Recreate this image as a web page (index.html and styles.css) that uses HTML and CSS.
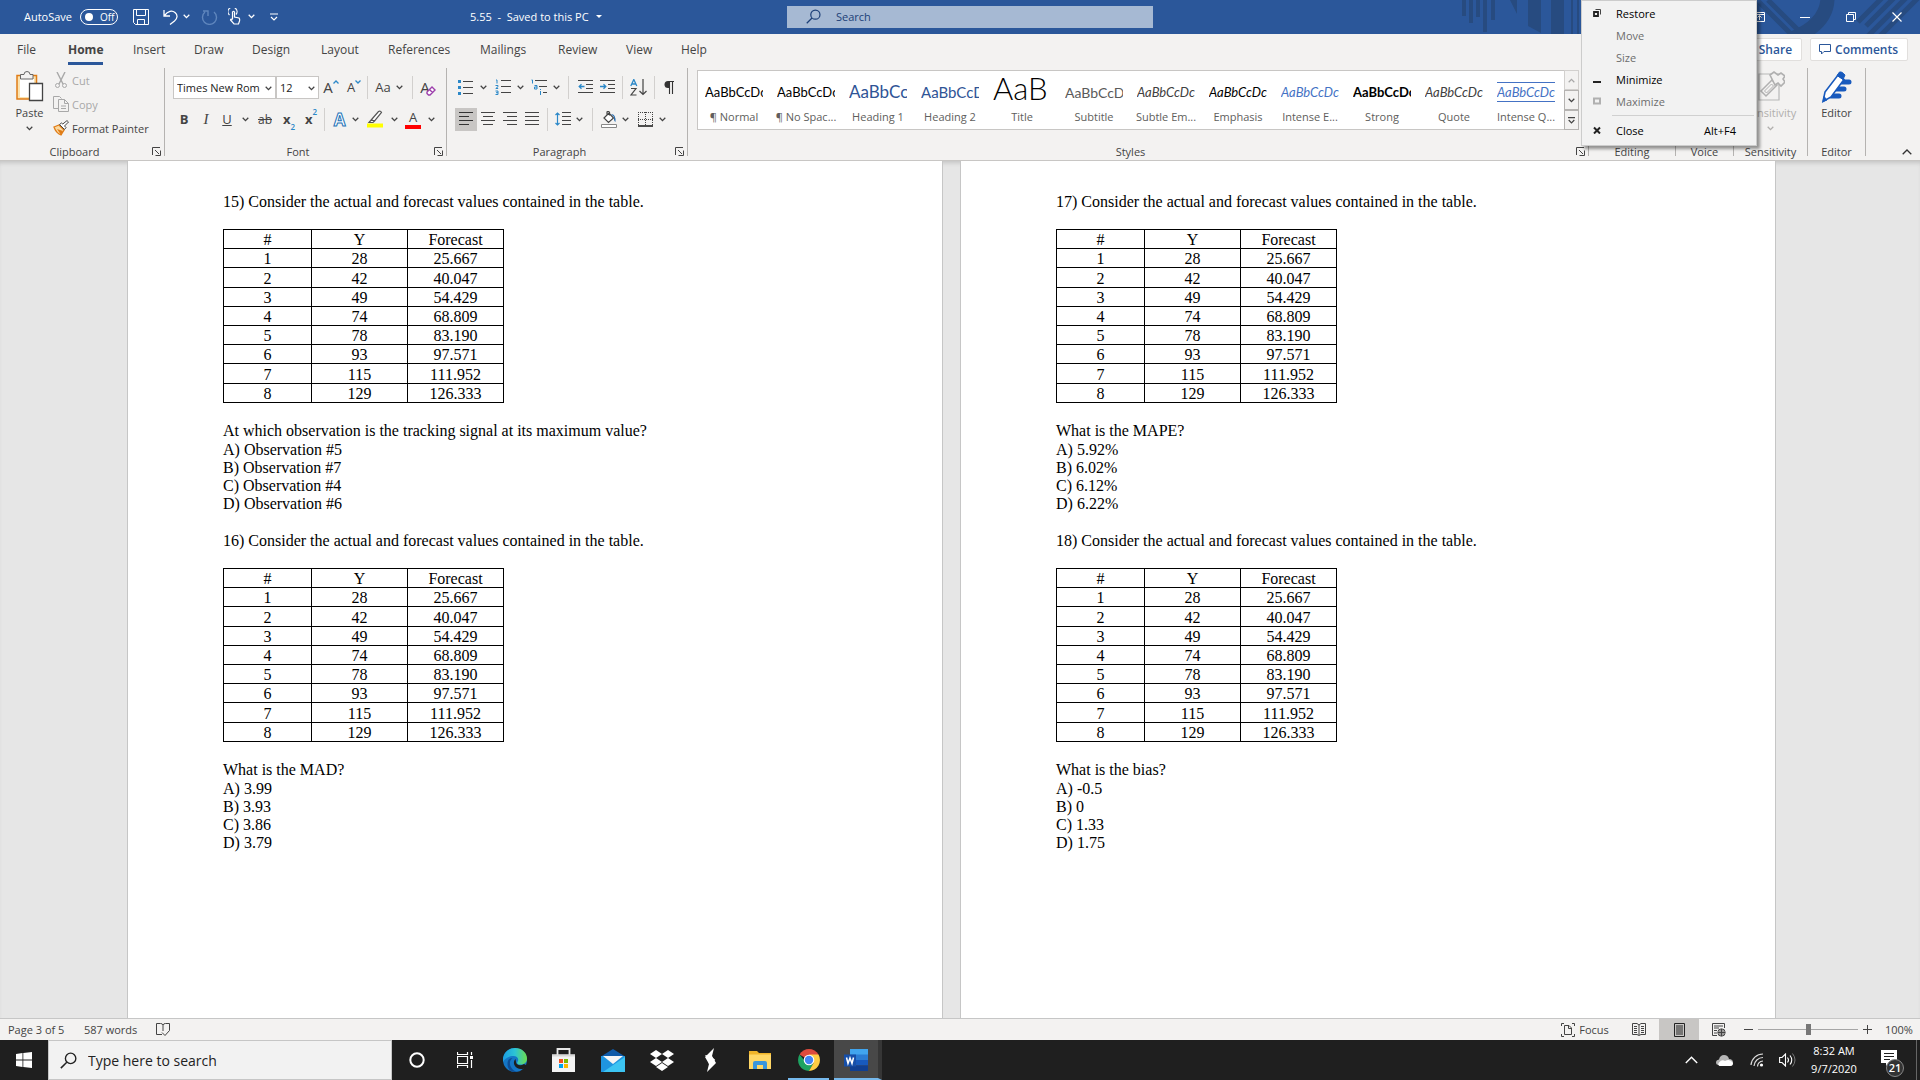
FILE: index.html
```html
<!DOCTYPE html>
<html lang="en">
<head>
  <meta charset="utf-8">
  <title>5.55 - Word</title>
  <link rel="stylesheet" href="styles.css">
</head>
<body>
  <svg class="defs" aria-hidden="true">
    <symbol id="chev" viewBox="0 0 7 5"><path d="M.7.8 3.5 3.6 6.3.8" fill="none" stroke="currentColor" stroke-width="1.3"/></symbol>
    <symbol id="launch" viewBox="0 0 9 9"><path d="M.5 8V.5H8M3 3l4 4M8.5 3.5v5h-5" fill="none" stroke="currentColor"/></symbol>
    <symbol id="lens" viewBox="0 0 16 16"><circle cx="10" cy="6" r="4.9" fill="none" stroke="currentColor" stroke-width="1.3"/><path d="M6.4 9.6.8 15.2" stroke="currentColor" stroke-width="1.4"/></symbol>
  </svg>

  <header class="titlebar">
    <svg class="decor" width="460" height="34" viewBox="0 0 460 34" aria-hidden="true">
      <path fill="#274b80" d="M2 0h4v16H2zM9 0h4v23H9zM16 0h4v17h-4zM23 0h4v32h-4zM31 0h4v20h-4zM50 0h7v14zM68 0h13v33l-13-7zM91 0h13v34H91zM111 0h2v34h-2zM117 0h2v34h-2zM123 0h2v34h-2z"/>
      <path fill="none" stroke="#274b80" stroke-width="14" d="M367-10q5 32-34 48"/>
      <path fill="none" stroke="#274b80" stroke-width="5" d="M297 0l34 34M308 0l34 34M398 22l24-24M406 26l28-28M398 46l48-48M412 44l48-48"/>
    </svg>
    <div class="quick">
      <label class="autosave">AutoSave <input type="checkbox"><span class="switch">Off</span></label>
      <button aria-label="Save"><svg width="16" height="16" viewBox="0 0 16 16"><path d="M.5.5h15v15h-13l-2-2zM3.500.5v6h9v-6M4.500 15.500v-5h7v5" fill="none" stroke="currentColor"/></svg></button>
      <button aria-label="Undo"><svg width="15" height="16" viewBox="0 0 15 16"><path d="M1 1v6h6M1.500 6.500C5 2 9 1 12 3.500s2.500 6-.5 8.500L7 15.500" fill="none" stroke="currentColor" stroke-width="1.300"/></svg></button>
      <button aria-label="Undo list"><svg width="7" height="5"><use href="#chev"/></svg></button>
      <button class="faded" aria-label="Redo"><svg width="17" height="16" viewBox="0 0 17 16"><path d="M2 2h5v5M4 3a7 7 0 1 0 9 0" fill="none" stroke="currentColor" stroke-width="1.400"/></svg></button>
      <button aria-label="Touch mode"><svg width="13" height="17" viewBox="0 0 13 17"><path d="M1.500 7A4.500 4.500 0 1 1 8 6.500M4.500 11V4q1-1.500 2 0v5l4.500 1q1 1 .5 3l-1 3H6l-3.500-4q0-2 2 0" fill="none" stroke="currentColor" stroke-width="1.200"/></svg></button>
      <button aria-label="Touch mode list"><svg width="7" height="5"><use href="#chev"/></svg></button>
      <button aria-label="Customize toolbar"><svg width="8" height="8" viewBox="0 0 8 8"><path d="M0 1h8M1 4l3 3 3-3" fill="none" stroke="currentColor" stroke-width="1.200"/></svg></button>
    </div>
    <button class="doc-name">5.55&nbsp; -&nbsp; Saved to this PC <span class="caret"></span></button>
    <label class="title-search"><svg width="15" height="15"><use href="#lens"/></svg><input type="text" placeholder="Search"></label>
    <div class="window-buttons">
      <button aria-label="Ribbon display options"><svg width="11" height="10" viewBox="0 0 11 10"><path d="M.5.5h10v9H.500zM.5 2.500h10M5.500 8V4M3.500 5.500l2-2 2 2" fill="none" stroke="#fff"/></svg></button>
      <button aria-label="Minimize"><svg width="10" height="10" viewBox="0 0 10 10"><path d="M0 5.500h10" stroke="#fff"/></svg></button>
      <button aria-label="Restore"><svg width="10" height="10" viewBox="0 0 10 10"><path d="M.5 2.500h7v7h-7zM2.500 2.500v-2h7v7h-2" fill="none" stroke="#fff"/></svg></button>
      <button aria-label="Close"><svg width="10" height="10" viewBox="0 0 10 10"><path d="M.5.5l9 9M9.500.5l-9 9" stroke="#fff" stroke-width="1.200"/></svg></button>
    </div>
  </header>

  <nav class="tabs">
    <div class="tab-list">
      <a href="#">File</a>
      <a href="#" class="active">Home</a>
      <a href="#">Insert</a>
      <a href="#">Draw</a>
      <a href="#">Design</a>
      <a href="#">Layout</a>
      <a href="#">References</a>
      <a href="#">Mailings</a>
      <a href="#">Review</a>
      <a href="#">View</a>
      <a href="#">Help</a>
    </div>
    <button class="pill">Share</button>
    <button class="pill"><svg width="12" height="11" viewBox="0 0 12 11"><path d="M.5.5h11v7H5L2.500 10V7.500h-2z" fill="none" stroke="currentColor"/></svg>Comments</button>
  </nav>

  <section class="ribbon">
    <div class="group clipboard">
      <div class="group-body">
        <button class="big paste">
          <svg width="29" height="32" viewBox="0 0 29 32"><path d="M2 4.500h19.500V28H2z" fill="#fbe3b0" stroke="#e07c16" stroke-width="1.500"/><path d="M5 8h14v18H5z" fill="#fff"/><path d="M5.500 3.500h3.500a3 3 0 0 1 6 0h3V8H5.500z" fill="#f3f2f1" stroke="#666"/><path d="M14.500 12.500h13v17h-13z" fill="#fff" stroke="#444" stroke-width="1.300"/></svg>
          Paste
          <svg width="7" height="5"><use href="#chev"/></svg>
        </button>
        <div class="small-list">
          <button class="off"><svg width="16" height="16" viewBox="0 0 16 16"><path d="M4 0l6 12M12 0 6 12" stroke="#a8a8a8" stroke-width="1.400"/><circle cx="4.500" cy="13.500" r="2" fill="none" stroke="#a8a8a8"/><circle cx="11.500" cy="13.500" r="2" fill="none" stroke="#a8a8a8"/></svg>Cut</button>
          <button class="off"><svg width="16" height="16" viewBox="0 0 16 16"><path d="M5 12.500H.500V.500h6l2 2M5.500 3.500h6l4 4v8h-10zM11.500 3.500v4h4M8 10h5M8 12.500h5" fill="none" stroke="#a8a8a8"/></svg>Copy</button>
          <button><svg width="16" height="16" viewBox="0 0 16 16"><path d="M1 7l5-2 5 5-3 5q-5-2-7-8z" fill="#fbd9a0" stroke="#e07c16" stroke-width="1.300"/><path d="M4 9l6 2-2 4z" fill="#e07c16"/><path d="M6.500 4.500l5 5 1.500-2-1.500-1.500L15.500 2 14 .6 9.800 4 8.500 3z" fill="#fff" stroke="#444"/></svg>Format Painter</button>
        </div>
      </div>
      <div class="group-name"><span>Clipboard</span><button aria-label="Clipboard settings"><svg width="9" height="9"><use href="#launch"/></svg></button></div>
    </div>

    <div class="group font">
      <div class="group-rows">
        <div class="tools font-top">
          <span class="combo"><select aria-label="Font"><option>Times New Roman</option></select><svg width="7" height="5"><use href="#chev"/></svg></span>
          <span class="combo"><select aria-label="Font size"><option>12</option></select><svg width="7" height="5"><use href="#chev"/></svg></span>
          <button class="grow" aria-label="Grow font">A<svg width="6" height="4" viewBox="0 0 6 4"><path d="M.5 3.500 3 1l2.500 2.500" fill="none" stroke="#2b88c8" stroke-width="1.300"/></svg></button>
          <button class="shrink" aria-label="Shrink font">A<svg width="6" height="4" viewBox="0 0 6 4"><path d="M.5.5 3 3 5.500.5" fill="none" stroke="#2b88c8" stroke-width="1.300"/></svg></button>
          <i class="bar"></i>
          <button class="case">Aa<svg width="7" height="5"><use href="#chev"/></svg></button>
          <i class="bar"></i>
          <button class="clear" aria-label="Clear formatting">A<svg width="10" height="10" viewBox="0 0 10 10"><path d="M1 6l5-5 3 3-5 5H2.500L1 7.500zM3.500 3.500l3 3" fill="#fff" stroke="#9c3eab" stroke-width="1.400"/></svg></button>
        </div>
        <div class="tools font-bottom">
          <button><b>B</b></button>
          <button class="slant">I</button>
          <button><u>U</u></button>
          <button aria-label="Underline list"><svg width="7" height="5"><use href="#chev"/></svg></button>
          <button class="strike">ab</button>
          <button class="script"><b>x</b><sub>2</sub></button>
          <button class="script"><b>x</b><sup>2</sup></button>
          <i class="bar"></i>
          <button class="effect">A</button>
          <button aria-label="Text effects list"><svg width="7" height="5"><use href="#chev"/></svg></button>
          <button aria-label="Highlight"><svg width="16" height="18" viewBox="0 0 16 18"><path d="M0 13.500h16v4H0z" fill="#ff0"/><path d="M5 9l6.500-7.500q2-1 3 1L8 10.500H5zM5 9l-3 3.500h4L8 10.500" fill="#fff" stroke="#555" stroke-width="1.200"/></svg></button>
          <button aria-label="Highlight list"><svg width="7" height="5"><use href="#chev"/></svg></button>
          <button class="color">A</button>
          <button aria-label="Font color list"><svg width="7" height="5"><use href="#chev"/></svg></button>
        </div>
      </div>
      <div class="group-name"><span>Font</span><button aria-label="Font settings"><svg width="9" height="9"><use href="#launch"/></svg></button></div>
    </div>

    <div class="group paragraph">
      <div class="group-rows">
        <div class="tools para-top">
          <button aria-label="Bullets"><svg width="15" height="15" viewBox="0 0 15 15"><path d="M0 0h3v3H0zM0 6h3v3H0zM0 12h3v3H0z" fill="#2b88c8"/><path d="M5 1.500h10M5 7.500h10M5 13.500h10" stroke="#444"/></svg></button>
          <button aria-label="Bullets list"><svg width="7" height="5"><use href="#chev"/></svg></button>
          <button aria-label="Numbering"><svg width="16" height="16" viewBox="0 0 16 16"><path d="M1 1h1v3.500M.5 6.500H3v1.200L.8 9.500h2.400M.5 12H3v3.500H.5M1 13.700h2" fill="none" stroke="#2b88c8"/><path d="M6 1.500h10M6 7.500h10M6 13.500h10" stroke="#444"/></svg></button>
          <button aria-label="Numbering list"><svg width="7" height="5"><use href="#chev"/></svg></button>
          <button aria-label="Multilevel list"><svg width="16" height="16" viewBox="0 0 16 16"><path d="M.5 1h1v3.500M3.500 6.500H6v3.500H3.500V8H6M9.500 12v4M9.500 10v1" fill="none" stroke="#2b88c8"/><path d="M4 1.500h12M8 7.500h8M12 13.500h4" stroke="#444"/></svg></button>
          <button aria-label="Multilevel choices"><svg width="7" height="5"><use href="#chev"/></svg></button>
          <i class="bar"></i>
          <button aria-label="Decrease indent"><svg width="15" height="14" viewBox="0 0 15 14"><path d="M0 .5h15M8 4.500h7M8 8.500h7M0 12.500h15" stroke="#444"/><path d="M6.500 6.500h-5M3.500 4.200 1.200 6.500l2.300 2.300" fill="none" stroke="#2b88c8" stroke-width="1.300"/></svg></button>
          <button aria-label="Increase indent"><svg width="15" height="14" viewBox="0 0 15 14"><path d="M0 .5h15M8 4.500h7M8 8.500h7M0 12.500h15" stroke="#444"/><path d="M0 6.500h5.500M3.500 4.200l2.300 2.300-2.300 2.300" fill="none" stroke="#2b88c8" stroke-width="1.300"/></svg></button>
          <i class="bar"></i>
          <button aria-label="Sort"><svg width="17" height="17" viewBox="0 0 17 17"><path d="M.8 7 3.800.5 6.800 7M2 5h3.600" fill="none" stroke="#2b88c8" stroke-width="1.300"/><path d="M1 9.500h5l-5 6.500h5.500M13 0v15.500M9.500 12l3.500 3.500 3.500-3.500" fill="none" stroke="#444" stroke-width="1.200"/></svg></button>
          <i class="bar"></i>
          <button aria-label="Show marks"><svg width="10" height="13" viewBox="0 0 10 13"><path d="M10 .5H4.500M5.500 0v13M8.500 0v13" stroke="#333" stroke-width="1.100"/><path d="M5.500 0H4a3.500 3.500 0 0 0 0 7h1.500z" fill="#333"/></svg></button>
        </div>
        <div class="tools para-bottom">
          <button class="pressed" aria-label="Align left"><svg width="14" height="14" viewBox="0 0 14 14"><path d="M0 .5h14M0 4.500h10M0 8.500h14M0 12.500h10" stroke="#333"/></svg></button>
          <button aria-label="Center"><svg width="14" height="14" viewBox="0 0 14 14"><path d="M0 .5h14M2 4.500h10M0 8.500h14M2 12.500h10" stroke="#444"/></svg></button>
          <button aria-label="Align right"><svg width="14" height="14" viewBox="0 0 14 14"><path d="M0 .5h14M4 4.500h10M0 8.500h14M4 12.500h10" stroke="#444"/></svg></button>
          <button aria-label="Justify"><svg width="14" height="14" viewBox="0 0 14 14"><path d="M0 .5h14M0 4.500h14M0 8.500h14M0 12.500h14" stroke="#444"/></svg></button>
          <i class="bar"></i>
          <button aria-label="Line spacing"><svg width="16" height="14" viewBox="0 0 16 14"><path d="M7 .5h9M7 4.500h9M7 8.500h9M7 12.500h9" stroke="#444"/><path d="M2.500 1v12M.5 3l2-2 2 2M.5 11l2 2 2-2" fill="none" stroke="#2b88c8" stroke-width="1.200"/></svg></button>
          <button aria-label="Line spacing list"><svg width="7" height="5"><use href="#chev"/></svg></button>
          <i class="bar"></i>
          <button aria-label="Shading"><svg width="16" height="17" viewBox="0 0 16 17"><path d="M.5 13.500h15v3H.500z" fill="#fff" stroke="#888"/><path d="M3 7l5-5 4.500 5-5 4.500zM6 4V1q1.500-1.500 2.500.5v3" fill="#fff" stroke="#444" stroke-width="1.200"/><path d="M10 3q5 0 4.500 8-2-1-1.500-5z" fill="#2b6fb0"/></svg></button>
          <button aria-label="Shading list"><svg width="7" height="5"><use href="#chev"/></svg></button>
          <button aria-label="Borders"><svg width="15" height="15" viewBox="0 0 15 15"><path d="M0 .5h15M0 7.500h15M.5 0v14M7.500 0v14M14.500 0v14" stroke="#444" stroke-dasharray="1 1"/><path d="M0 14h15" stroke="#222" stroke-width="1.600"/></svg></button>
          <button aria-label="Borders list"><svg width="7" height="5"><use href="#chev"/></svg></button>
        </div>
      </div>
      <div class="group-name"><span>Paragraph</span><button aria-label="Paragraph settings"><svg width="9" height="9"><use href="#launch"/></svg></button></div>
    </div>

    <div class="group styles">
      <div class="gallery">
        <div class="gallery-items">
          <button><span class="sample">AaBbCcDc</span>¶ Normal</button>
          <button><span class="sample">AaBbCcDc</span>¶ No Spac...</button>
          <button><span class="sample h1">AaBbCc</span>Heading 1</button>
          <button><span class="sample h2">AaBbCcD</span>Heading 2</button>
          <button><span class="sample title">AaB</span>Title</button>
          <button><span class="sample subtitle">AaBbCcD</span>Subtitle</button>
          <button><span class="sample subtle">AaBbCcDc</span>Subtle Em...</button>
          <button><span class="sample emphasis">AaBbCcDc</span>Emphasis</button>
          <button><span class="sample intense">AaBbCcDc</span>Intense E...</button>
          <button><span class="sample strong">AaBbCcDc</span>Strong</button>
          <button><span class="sample subtle">AaBbCcDc</span>Quote</button>
          <button><span class="sample intense quote">AaBbCcDc</span>Intense Q...</button>
        </div>
        <div class="gallery-scroll">
          <button disabled aria-label="Up"><svg class="flip" width="7" height="5"><use href="#chev"/></svg></button>
          <button aria-label="Down"><svg width="7" height="5"><use href="#chev"/></svg></button>
          <button aria-label="More styles"><svg width="7" height="7" viewBox="0 0 7 7"><path d="M0 .6h7M.7 3l2.800 2.800L6.300 3" fill="none" stroke="currentColor" stroke-width="1.200"/></svg></button>
        </div>
      </div>
      <div class="group-name"><span>Styles</span><button aria-label="Styles settings"><svg width="9" height="9"><use href="#launch"/></svg></button></div>
    </div>

    <div class="group editing"><div class="group-name"><span>Editing</span></div></div>
    <div class="group voice"><div class="group-name"><span>Voice</span></div></div>
    <div class="group sensitivity">
      <div class="group-body">
        <button class="big" disabled>
          <svg width="28" height="32" viewBox="0 0 28 32"><path d="M2 3h20v26H2z" fill="none" stroke="#b8b8b8" stroke-width="1.200"/><path d="M4 20 15 9l5 5L9 25z" fill="#f3f2f1" stroke="#b0b0b0" stroke-width="1.500"/><path d="M7.500 20l7-7 2 2-7 7z" fill="none" stroke="#b0b0b0"/><path d="M13 4l4-3 4 3 3-2 4 3-2 3 2 3-4 4-3-3-3 2z" fill="#f3f2f1" stroke="#b0b0b0" stroke-width="1.600"/></svg>
          Sensitivity
          <svg width="7" height="5"><use href="#chev"/></svg>
        </button>
      </div>
      <div class="group-name"><span>Sensitivity</span></div>
    </div>
    <div class="group editor">
      <div class="group-body">
        <button class="big">
          <svg width="31" height="32" viewBox="0 0 31 32"><path d="M17 11h11M14 18h9M10 25h8" stroke="#185abd" stroke-width="5" stroke-linecap="round"/><path d="M4 21 17 4l6 4.500L10 26l-8 4.500z" fill="#fff" stroke="#185abd" stroke-width="1.600"/><path d="M16 4.500 18.500 1q2-1 5.500 3l-2 4.500zM2 30.500l1-5 3 3.500z" fill="#185abd" stroke="#185abd"/></svg>
          Editor
        </button>
      </div>
      <div class="group-name"><span>Editor</span></div>
    </div>
    <button class="collapse" aria-label="Collapse ribbon"><svg width="10" height="6" viewBox="0 0 10 6"><path d="M.7 5.300 5 1l4.300 4.300" fill="none" stroke="#333" stroke-width="1.300"/></svg></button>
  </section>

  <main class="workspace">
    <article class="page">
      <section class="question">
        <p>15) Consider the actual and forecast values contained in the table.</p>
        <table>
          <tr><th>#</th><th>Y</th><th>Forecast</th></tr>
          <tr><td>1</td><td>28</td><td>25.667</td></tr>
          <tr><td>2</td><td>42</td><td>40.047</td></tr>
          <tr><td>3</td><td>49</td><td>54.429</td></tr>
          <tr><td>4</td><td>74</td><td>68.809</td></tr>
          <tr><td>5</td><td>78</td><td>83.190</td></tr>
          <tr><td>6</td><td>93</td><td>97.571</td></tr>
          <tr><td>7</td><td>115</td><td>111.952</td></tr>
          <tr><td>8</td><td>129</td><td>126.333</td></tr>
        </table>
        <p class="ask">At which observation is the tracking signal at its maximum value?</p>
        <p>A) Observation #5</p>
        <p>B) Observation #7</p>
        <p>C) Observation #4</p>
        <p>D) Observation #6</p>
      </section>
      <section class="question">
        <p>16) Consider the actual and forecast values contained in the table.</p>
        <table>
          <tr><th>#</th><th>Y</th><th>Forecast</th></tr>
          <tr><td>1</td><td>28</td><td>25.667</td></tr>
          <tr><td>2</td><td>42</td><td>40.047</td></tr>
          <tr><td>3</td><td>49</td><td>54.429</td></tr>
          <tr><td>4</td><td>74</td><td>68.809</td></tr>
          <tr><td>5</td><td>78</td><td>83.190</td></tr>
          <tr><td>6</td><td>93</td><td>97.571</td></tr>
          <tr><td>7</td><td>115</td><td>111.952</td></tr>
          <tr><td>8</td><td>129</td><td>126.333</td></tr>
        </table>
        <p class="ask">What is the MAD?</p>
        <p>A) 3.99</p>
        <p>B) 3.93</p>
        <p>C) 3.86</p>
        <p>D) 3.79</p>
      </section>
    </article>
    <article class="page">
      <section class="question">
        <p>17) Consider the actual and forecast values contained in the table.</p>
        <table>
          <tr><th>#</th><th>Y</th><th>Forecast</th></tr>
          <tr><td>1</td><td>28</td><td>25.667</td></tr>
          <tr><td>2</td><td>42</td><td>40.047</td></tr>
          <tr><td>3</td><td>49</td><td>54.429</td></tr>
          <tr><td>4</td><td>74</td><td>68.809</td></tr>
          <tr><td>5</td><td>78</td><td>83.190</td></tr>
          <tr><td>6</td><td>93</td><td>97.571</td></tr>
          <tr><td>7</td><td>115</td><td>111.952</td></tr>
          <tr><td>8</td><td>129</td><td>126.333</td></tr>
        </table>
        <p class="ask">What is the MAPE?</p>
        <p>A) 5.92%</p>
        <p>B) 6.02%</p>
        <p>C) 6.12%</p>
        <p>D) 6.22%</p>
      </section>
      <section class="question">
        <p>18) Consider the actual and forecast values contained in the table.</p>
        <table>
          <tr><th>#</th><th>Y</th><th>Forecast</th></tr>
          <tr><td>1</td><td>28</td><td>25.667</td></tr>
          <tr><td>2</td><td>42</td><td>40.047</td></tr>
          <tr><td>3</td><td>49</td><td>54.429</td></tr>
          <tr><td>4</td><td>74</td><td>68.809</td></tr>
          <tr><td>5</td><td>78</td><td>83.190</td></tr>
          <tr><td>6</td><td>93</td><td>97.571</td></tr>
          <tr><td>7</td><td>115</td><td>111.952</td></tr>
          <tr><td>8</td><td>129</td><td>126.333</td></tr>
        </table>
        <p class="ask">What is the bias?</p>
        <p>A) -0.5</p>
        <p>B) 0</p>
        <p>C) 1.33</p>
        <p>D) 1.75</p>
      </section>
    </article>
  </main>

  <footer class="statusbar">
    <span class="status-page">Page 3 of 5</span>
    <span class="status-words">587 words</span>
    <button aria-label="Proofing"><svg width="14" height="14" viewBox="0 0 14 14"><path d="M6 11.500H.500V.500h4Q6.500.5 7 2q.5-1.500 2.500-1.500h4v7M7 2v6M6 9.500l3 3 4.500-5" fill="none" stroke="#444"/></svg></button>
    <div class="views">
      <button class="focus"><svg width="14" height="14" viewBox="0 0 14 14"><path d="M3 .5H.500V3M11 .5h2.500V3M3 13.500H.500V11M11 13.500h2.500V11M3.500 2.500H8L10.500 5v6.500h-7zM7.500 2.500v3h3" fill="none" stroke="#444"/></svg>Focus</button>
      <button class="view" aria-label="Read mode"><svg width="14" height="13" viewBox="0 0 14 13"><path d="M.5.5H5L7 2 9 .5h4.500v11H9l-2 1-2-1H.500zM7 2v10M2 3.500h3M2 5.500h3M2 7.500h3M2 9.500h3M9 3.500h3M9 5.500h3M9 7.500h3M9 9.500h3" fill="none" stroke="#444"/></svg></button>
      <button class="view current" aria-label="Print layout"><svg width="11" height="14" viewBox="0 0 11 14"><path d="M.5.5h10v13H.500zM2 3h7M2 5h7M2 7h7M2 9h7M2 11h7" fill="none" stroke="#222"/></svg></button>
      <button class="view" aria-label="Web layout"><svg width="14" height="14" viewBox="0 0 14 14"><path d="M5 12.500H.500V.500h12V5M2 3h9M2 5h5M2 7.500h3M2 10h3" fill="none" stroke="#444"/><circle cx="9.500" cy="9.500" r="3.700" fill="#f3f2f1" stroke="#444"/><path d="M6 9.500h7M9.500 6v7M8 6.500v6M11 6.500v6" stroke="#444"/></svg></button>
      <button class="zoom-out" aria-label="Zoom out"><svg width="9" height="9" viewBox="0 0 9 9"><path d="M0 4.500h9" stroke="#444"/></svg></button>
      <input type="range" min="0" max="100" value="50" aria-label="Zoom">
      <button class="zoom-in" aria-label="Zoom in"><svg width="9" height="9" viewBox="0 0 9 9"><path d="M0 4.500h9M4.500 0v9" stroke="#444"/></svg></button>
      <span class="percent">100%</span>
    </div>
  </footer>

  <div class="taskbar">
    <button class="start" aria-label="Start"><svg width="16" height="16" viewBox="0 0 16 16"><path d="M0 2l6.500-1v6.600H0zM7.300 1 16 0v7.600H7.300zM0 8.400h6.500V15L0 14zM7.300 8.400H16V16l-8.700-1z" fill="#fff"/></svg></button>
    <label class="task-search"><svg width="17" height="17"><use href="#lens"/></svg><input type="text" placeholder="Type here to search"></label>
    <div class="apps">
      <button aria-label="Cortana"><svg width="16" height="16" viewBox="0 0 16 16"><circle cx="8" cy="8" r="6.700" fill="none" stroke="#fff" stroke-width="2"/></svg></button>
      <button aria-label="Task view"><svg width="17" height="16" viewBox="0 0 17 16"><path d="M.5 0v2.500h10V0M.5 16v-2.500h10V16M.5 4.500h10v7H.500zM14.500 0v3M14.500 8v8" fill="none" stroke="#fff" stroke-width="1.200"/><path d="M13 4h3v3h-3z" fill="#fff"/></svg></button>
      <button aria-label="Edge"><svg width="24" height="24" viewBox="0 0 24 24"><defs><linearGradient id="edge" x1="0" x2="1"><stop offset="0" stop-color="#1b9de2"/><stop offset=".5" stop-color="#2cc3d5"/><stop offset="1" stop-color="#6cdd4c"/></linearGradient></defs><circle cx="12" cy="12" r="12" fill="#1476c6"/><path d="M0 10C1 4 6 0 12 0c7 0 12 5 12 10.500 0 4-3 6-6.500 6-2.500 0-4-1-3-2.500 2-3-.5-6-4-6-5 0-9 3-10.500 6z" fill="url(#edge)"/><path d="M9.500 10c-5 4-2.500 11.500 4.500 14-5 .5-9.500-2-9.500-8 0-4 2-6 5-6z" fill="#0d4d96"/><path d="M12.500 11c-4 4 0 10 5.500 10 2 0 3.500-.5 4.500-1.500l1.500-2-3-1.500c-4 2.500-8 .5-8-2z" fill="#1e1e1e"/></svg></button>
      <button aria-label="Store"><svg width="23" height="24" viewBox="0 0 23 24"><path d="M5.500 7V1h12v6" fill="none" stroke="#e8e8e8" stroke-width="1.800"/><path d="M0 6.500h23V24H0z" fill="#f4f4f4"/><path d="M0 6.500h23v2H0z" fill="#d8d8d8"/><path d="M7 11h4v4H7z" fill="#f25022"/><path d="M12 11h4v4h-4z" fill="#7fba00"/><path d="M7 16h4v4H7z" fill="#00a4ef"/><path d="M12 16h4v4h-4z" fill="#ffb900"/></svg></button>
      <button aria-label="Mail"><svg width="24" height="23" viewBox="0 0 24 23"><path d="M0 7.500 12 0l12 7.500z" fill="#0f5aa8"/><path d="M0 7h24v16H0z" fill="#1f95e0"/><path d="M24 8v15H2z" fill="#3cc4f2"/><path d="M2 7h20l-10 8z" fill="#f5f5f5"/></svg></button>
      <button aria-label="Dropbox"><svg width="24" height="21" viewBox="0 0 24 21"><path d="M6 0l6 4-6 4-6-4zM18 0l6 4-6 4-6-4zM6 8l6 4-6 4-6-4zM18 8l6 4-6 4-6-4zM6 17l6-4 6 4-6 4z" fill="#fff"/></svg></button>
      <button aria-label="S app"><svg width="13" height="24" viewBox="0 0 13 24"><path d="M10 0 8 8l4 7-9 9 2-8-4-7z" fill="#fff"/><path d="M5.500 16 9 12 4.500 8.500 8 8" fill="none" stroke="#fff" stroke-width="3"/></svg></button>
      <button aria-label="File Explorer"><svg width="22" height="18" viewBox="0 0 22 18"><path d="M0 0h8l2 2h12v16H0z" fill="#f0b429"/><path d="M0 3.500h22V18H0z" fill="#ffd766"/><path d="M4 18v-6q0-2 2-2h10q2 0 2 2v6h-4v-4H8v4z" fill="#3a96dd"/></svg></button>
      <button class="running" aria-label="Chrome"><svg width="22" height="22" viewBox="0 0 22 22"><path d="M11 11 1.500 5.500a11 11 0 0 1 19 0z" fill="#dd4b3e"/><path d="M11 11h-5L1.500 5.500A11 11 0 0 0 11 22l4-7z" fill="#1da362"/><path d="M11 5.500h9.500A11 11 0 0 1 11 22l4.500-8z" fill="#ffce44"/><circle cx="11" cy="11" r="5.300" fill="#fff"/><circle cx="11" cy="11" r="4.200" fill="#4385f5"/></svg></button>
      <button class="running open" aria-label="Word"><svg width="24" height="22" viewBox="0 0 24 22"><path d="M6 0h18v6H6z" fill="#41a5ee"/><path d="M6 5.500h18V11H6z" fill="#2b7cd3"/><path d="M6 11h18v5.500H6z" fill="#185abd"/><path d="M6 16.500h18V22H6z" fill="#103f91"/><path d="M0 5.500h12v12H0z" fill="#174fa8"/><path d="M2.500 8.500l1.500 6 2-5.500 2 5.500 1.500-6" fill="none" stroke="#fff" stroke-width="1.500"/></svg></button>
    </div>
    <div class="tray">
      <button aria-label="Hidden icons"><svg width="13" height="8" viewBox="0 0 13 8"><path d="M.8 7 6.500 1.300 12.200 7" fill="none" stroke="#fff" stroke-width="1.400"/></svg></button>
      <button aria-label="OneDrive"><svg width="17" height="11" viewBox="0 0 17 11"><path d="M3 10Q0 10 0 7.500T3 4.500Q4 0 8 0t5 4q4 0 4 3.500T14 11H3z" fill="#b5b5b5"/><path d="M4 11q-3-1-1-3.500Q6 4 9 6q5-3 8 2 0 3-3 3z" fill="#fff"/></svg></button>
      <button aria-label="Wi-Fi"><svg width="14" height="14" viewBox="0 0 14 14"><path d="M1 12A12 12 0 0 1 13 1M4 13a9 9 0 0 1 9-8.500M7.500 13.500A6 6 0 0 1 13 8" fill="none" stroke="#ddd" stroke-width="1.200"/><circle cx="11.500" cy="12" r="1.600" fill="#fff"/></svg></button>
      <button aria-label="Volume"><svg width="17" height="14" viewBox="0 0 17 14"><path d="M.6 4.500H3L6.500 1v12L3 9.500H.600z" fill="none" stroke="#fff" stroke-width="1.100"/><path d="M8.500 4.500q2 2.500 0 5M11 2.500q3.500 4.500 0 9" fill="none" stroke="#fff" stroke-width="1.100"/><path d="M13.500.5q5 6.500 0 13" fill="none" stroke="#777"/></svg></button>
      <button class="clock">8:32 AM<br>9/7/2020</button>
      <button class="notify" aria-label="Notifications"><svg width="16" height="16" viewBox="0 0 16 16"><path d="M0 0h16v13H9l-4 3v-3H0z" fill="#fff"/><path d="M3 3.500h10M3 6.500h10M3 9.500h6" stroke="#1f1f1f"/></svg><span class="badge">21</span></button>
      <i class="peek"></i>
    </div>
  </div>

  <div class="sysmenu">
    <button><svg width="8" height="8" viewBox="0 0 8 8"><path d="M1 3h4v4H1z" fill="none" stroke="#222" stroke-width="1.800"/><path d="M2.500.5h5v5" fill="none" stroke="#444"/></svg>Restore</button>
    <button disabled><i></i>Move</button>
    <button disabled><i></i>Size</button>
    <button><svg width="8" height="8" viewBox="0 0 8 8"><path d="M0 6h8v2H0z" fill="#222"/></svg>Minimize</button>
    <button disabled><svg width="8" height="8" viewBox="0 0 8 8"><path d="M1 1.500h6v5H1z" fill="none" stroke="#b0b0b0" stroke-width="2"/></svg>Maximize</button>
    <hr>
    <button><svg width="8" height="8" viewBox="0 0 8 8"><path d="M1 1.500l6 6M7 1.500l-6 6" stroke="#222" stroke-width="2"/></svg>Close<kbd>Alt+F4</kbd></button>
  </div>
</body>
</html>
```

FILE: styles.css
```css
* {
  box-sizing: border-box;
}
body {
  margin: 0;
  height: 100vh;
  display: flex;
  flex-direction: column;
  overflow: hidden;
  font-family: "Open Sans", "Noto Sans", sans-serif;
  font-size: 11px;
  color: #444;
}
button {
  border: 0;
  padding: 0;
  background: none;
  font: inherit;
  color: inherit;
  display: flex;
  align-items: center;
  justify-content: center;
}
input, select {
  font: inherit;
  border: 0;
  outline: 0;
}
svg {
  flex: none;
}
.defs {
  position: absolute;
  width: 0;
  height: 0;
}

/* title bar */
.titlebar {
  position: relative;
  display: grid;
  grid-template-columns: 470px 317px 366px 1fr;
  align-items: center;
  height: 34px;
  padding-bottom: 1px;
  background: #2b579a;
  color: #fff;
}
.decor {
  position: absolute;
  top: 0;
  right: 0;
}
.quick {
  display: grid;
  grid-template-columns: 118px 46px 12px 20px 26px 24px 10px 36px;
  align-items: center;
}
.autosave {
  display: flex;
  align-items: center;
  justify-content: flex-end;
  gap: 8px;
}
.autosave input {
  position: absolute;
  opacity: 0;
}
.switch {
  display: flex;
  align-items: center;
  gap: 7px;
  width: 38px;
  height: 16px;
  padding-left: 4px;
  border: 1px solid #fff;
  border-radius: 8px;
  font-size: 10px;
}
.switch::before {
  content: "";
  width: 8px;
  height: 8px;
  border-radius: 50%;
  background: #fff;
}
.faded {
  color: #5f86bd;
}
.doc-name {
  justify-content: flex-start;
}
.caret {
  margin-left: 7px;
  border: 3px solid transparent;
  border-top-color: #fff;
  border-bottom: 0;
}
.title-search {
  display: flex;
  align-items: center;
  height: 22px;
  padding-left: 19px;
  gap: 13px;
  background: #a6b9d3;
  color: #1c3f77;
}
.title-search input {
  flex: 1;
  background: none;
}
.title-search input::placeholder {
  color: #1c3f77;
}
.window-buttons {
  position: relative;
  display: flex;
  justify-content: flex-end;
}
.window-buttons button {
  width: 46px;
  height: 32px;
}

/* tabs */
.tabs {
  display: flex;
  align-items: center;
  height: 34px;
  padding: 0 12px 0 17px;
  background: #f3f2f1;
}
.tab-list {
  flex: 1;
  display: grid;
  grid-template-columns: 51px 65px 61px 58px 69px 67px 92px 78px 68px 55px 40px;
  justify-items: start;
  font-size: 12px;
}
.tab-list a {
  padding: 3px 0;
  line-height: 19px;
  color: #444;
  text-decoration: none;
  border-bottom: 3px solid transparent;
}
.tab-list .active {
  font-weight: 700;
  border-color: #2b579a;
}
.pill {
  height: 23px;
  margin: 0 0 4px 8px;
  padding: 0 9px 0 8px;
  gap: 4px;
  background: #fff;
  border: 1px solid #e1dfdd;
  border-radius: 2px;
  color: #2b579a;
  font-size: 12px;
  font-weight: 600;
}

/* ribbon */
.ribbon {
  display: flex;
  height: 93px;
  padding-bottom: 4px;
  background: #f3f2f1;
  border-bottom: 1px solid #c8c6c4;
}
.group {
  display: flex;
  flex-direction: column;
  flex: none;
  border-right: 1px solid #b5b3b1;
}
.clipboard { width: 165px; }
.font { width: 282px; }
.paragraph { width: 241px; }
.styles { flex: 1; min-width: 0; }
.editing { width: 87px; }
.voice { width: 58px; }
.sensitivity { width: 74px; }
.editor { width: 58px; }
.group-body,
.group-rows {
  flex: 1;
}
.group-body {
  display: flex;
}
.group-name {
  display: flex;
  align-items: center;
  height: 9px;
  margin-top: auto;
}
.group-name span {
  flex: 1;
  text-align: center;
  line-height: 9px;
}
.group-name button {
  width: 15px;
}
.big {
  flex-direction: column;
  justify-content: flex-start;
  flex: 1;
  padding-top: 3px;
  line-height: 17px;
}
.big svg:first-child {
  margin-bottom: 1px;
}
.big svg + svg {
  margin-top: 5px;
}
.big:disabled {
  color: #b1afad;
}
.paste {
  flex: none;
  width: 45px;
  padding-left: 14px;
}
.small-list {
  padding: 0 0 0 8px;
}
.small-list button {
  height: 24px;
  gap: 3px;
}
.small-list .off {
  color: #a8a8a8;
}
.tools {
  display: grid;
  align-items: center;
  height: 34px;
  padding: 4px 0 0 8px;
}
.tools > * {
  height: 23px;
}
.tools + .tools {
  padding-top: 0;
}
.bar {
  justify-self: center;
  width: 1px;
  background: #d2d0ce;
}
.font-top {
  grid-template-columns: 103px 43px 24px 22px 4px 40px 6px 26px;
}
.font-bottom {
  grid-template-columns: 22px 22px 20px 16px 24px 24px 20px 6px 25px 7px 32px 6px 32px 5px;
  font-size: 13px;
}
.para-top {
  grid-template-columns: 21px 14px 25px 11px 26px 8px 16px 18px 26px 4px 28px 4px 26px;
}
.para-bottom {
  grid-template-columns: repeat(4, 22px) 8px 24px 8px 18px 16px 16px 24px 10px;
}
.font-bottom svg,
.para-bottom svg,
.para-top svg {
  margin: 0 -8px;
}
.combo {
  position: relative;
  border: 1px solid #c8c6c4;
  background: #fff;
}
.combo select {
  appearance: none;
  width: 100%;
  height: 100%;
  padding: 0 15px 0 3px;
  background: #fff;
  color: #222;
}
.combo svg {
  position: absolute;
  right: 3px;
  top: 9px;
}
.grow,
.shrink,
.clear {
  align-items: flex-start;
  font-size: 15px;
  line-height: 22px;
}
.shrink {
  font-size: 13px;
}
.grow svg,
.shrink svg {
  margin-top: 4px;
}
.clear svg {
  margin: 10px 0 0 -4px;
}
.case {
  gap: 5px;
  font-size: 13px;
}
.slant {
  font-family: "Liberation Serif", serif;
  font-style: italic;
  font-size: 15px;
}
.strike {
  font-size: 12px;
  text-decoration: line-through;
}
.script {
  align-items: center;
}
.script sub,
.script sup {
  font-size: 8px;
  line-height: 8px;
  color: #2b88c8;
  font-weight: 600;
}
.script sub { align-self: flex-end; }
.script sup { align-self: flex-start; }
.effect {
  color: #fff;
  font-size: 17px;
  font-weight: 700;
  -webkit-text-stroke: 1px #2373b8;
}
.tools .color {
  justify-self: center;
  width: 16px;
  height: 19px;
  line-height: 14px;
  border-bottom: 4px solid #f00;
}
.pressed {
  background: #c8c6c4;
}

/* style gallery */
.gallery {
  display: flex;
  height: 60px;
  margin: 2px 9px 0;
  border: 1px solid #c8c6c4;
  background: #fff;
}
.gallery-items {
  flex: 1;
  display: grid;
  grid-template-columns: repeat(12, 72px);
  overflow: hidden;
}
.gallery-items button {
  flex-direction: column;
  justify-content: flex-start;
  padding: 7px 0 0;
  color: #605e5c;
  white-space: nowrap;
}
.sample {
  width: 58px;
  height: 26px;
  margin-bottom: 5px;
  overflow: hidden;
  text-align: left;
  font-family: Lato, sans-serif;
  font-size: 13px;
  line-height: 29px;
  color: #000;
}
.h1 { font-size: 17px; line-height: 28px; color: #2f5496; }
.h2 { font-size: 15px; line-height: 28px; color: #2f5496; }
.title { font-size: 31px; font-weight: 300; line-height: 20px; }
.subtitle { font-size: 14px; color: #5a5a5a; }
.subtle { font-style: italic; color: #404040; }
.emphasis { font-style: italic; }
.intense { font-style: italic; color: #4472c4; }
.strong { font-weight: 700; }
.quote {
  height: 20px;
  margin: 4px 0 7px;
  line-height: 19px;
  border-top: 1px solid #4472c4;
  border-bottom: 1px solid #4472c4;
}
.gallery-scroll {
  display: flex;
  flex-direction: column;
  width: 15px;
  margin: -1px;
}
.gallery-scroll button {
  flex: 1;
  border: 1px solid #b5b3b1;
  background: #f3f2f1;
}
.gallery-scroll button:disabled {
  color: #a8a8a8;
  border-color: #d2d0ce;
}
.flip {
  transform: rotate(180deg);
}
.collapse {
  width: 54px;
  height: 9px;
  padding-left: 28px;
  align-self: flex-end;
}

/* document */
.workspace {
  flex: 1;
  min-height: 0;
  display: flex;
  justify-content: center;
  gap: 17px;
  padding-right: 17px;
  overflow: hidden;
  background: #e6e6e6;
  box-shadow: inset 0 4px 4px -2px rgba(0, 0, 0, 0.15);
}
.page {
  flex: none;
  width: 816px;
  padding: 32px 95px 0;
  background: #fff;
  border: 1px solid #c6c6c6;
  border-width: 0 1px;
  font-family: "Liberation Serif", serif;
  font-size: 16px;
  line-height: 18px;
  color: #000;
}
.question {
  margin-bottom: 19px;
}
.question p {
  margin: 0;
}
.question .ask {
  margin-bottom: 1px;
}
.question table {
  margin: 18px 0 19px;
  border-collapse: collapse;
}
.question th,
.question td {
  width: 96px;
  height: 19px;
  padding: 1px 0 0;
  line-height: 17px;
  border: 1px solid #000;
  font-weight: 400;
  text-align: center;
}
.question th:first-child,
.question td:first-child {
  width: 88px;
}
.question tr:nth-child(5n + 3) td {
  height: 20px;
}

/* status bar */
.statusbar {
  display: flex;
  align-items: center;
  height: 22px;
  padding-left: 8px;
  background: #f3f2f1;
  border-top: 1px solid #c6c6c6;
}
.status-page { width: 76px; }
.status-words { width: 72px; }
.views {
  display: flex;
  align-items: center;
  align-self: stretch;
  margin-left: auto;
}
.focus {
  gap: 4px;
  width: 50px;
  margin-right: 9px;
}
.view {
  width: 40px;
  height: 100%;
}
.current {
  background: #c8c6c4;
}
.zoom-out { width: 19px; }
.zoom-in { width: 18px; }
.views input {
  appearance: none;
  width: 100px;
  height: 11px;
  margin: 0;
  background: linear-gradient(#a6a6a6, #a6a6a6) center / 100% 1px no-repeat;
}
.views input::-webkit-slider-thumb {
  appearance: none;
  width: 5px;
  height: 11px;
  background: #777;
}
.percent {
  width: 44px;
  padding-left: 9px;
}

/* taskbar */
.taskbar {
  display: flex;
  height: 40px;
  background: #1f1f1f;
  color: #fff;
}
.start {
  width: 48px;
}
.task-search {
  display: flex;
  align-items: center;
  width: 344px;
  padding-left: 11px;
  gap: 9px;
  background: #f2f2f2;
  border: 1px solid #c6c6c6;
  color: #222;
  font-size: 14px;
}
.task-search input {
  flex: 1;
  background: none;
}
.task-search input::placeholder {
  color: #222;
}
.apps {
  display: grid;
  grid-template-columns: repeat(10, 49px);
}
.running {
  margin: 0 4px;
  border-bottom: 2px solid #76b9ed;
  padding-top: 2px;
}
.running.open {
  margin: 0 0 0 1px;
  background: #484848;
  border-right: 4px solid #363636;
}
.tray {
  display: grid;
  grid-template-columns: 34px 32px 34px 26px 68px 48px 4px;
  margin-left: auto;
}
.clock {
  line-height: 18px;
}
.notify {
  position: relative;
  padding: 0 7px 5px 0;
}
.badge {
  position: absolute;
  left: 18px;
  top: 19px;
  width: 18px;
  height: 18px;
  border: 1px solid #888;
  border-radius: 50%;
  background: #333;
  font-size: 11px;
  font-weight: 600;
  line-height: 16px;
}
.peek {
  border-left: 1px solid #666;
}

/* window menu */
.sysmenu {
  position: absolute;
  top: 0;
  right: 163px;
  width: 176px;
  padding: 1px 2px 4px;
  background: #f2f2f2;
  border: 1px solid #ccc;
  box-shadow: 3px 3px 3px rgba(0, 0, 0, 0.4);
  color: #000;
}
.sysmenu button {
  display: grid;
  grid-template-columns: 8px 1fr auto;
  gap: 15px;
  justify-items: start;
  width: 100%;
  height: 22px;
  padding: 0 18px 0 9px;
}
.sysmenu button:disabled {
  color: #6d6d6d;
}
.sysmenu hr {
  height: 1px;
  margin: 3px 0 3px 28px;
  border: 0;
  background: #d0d0d0;
}
.sysmenu kbd {
  font: inherit;
}
```
